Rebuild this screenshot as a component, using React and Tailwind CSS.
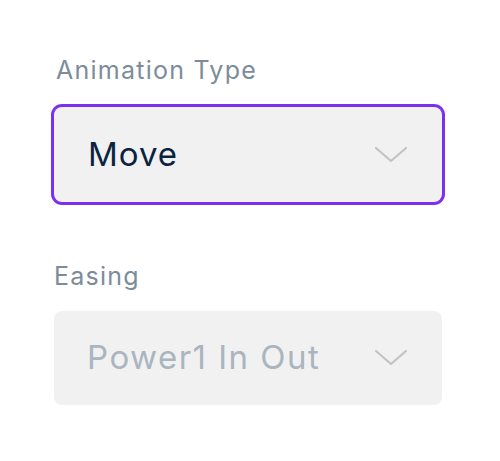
import React from "react";

function Chevron({ className }) {
  return (
    <svg width="34" height="18" viewBox="0 0 34 18" className={className} fill="none">
      <path d="M2 2 L17 15 L32 2" stroke="#c3c3c3" strokeWidth="2.2" strokeLinecap="round" strokeLinejoin="round" />
    </svg>
  );
}

export default function App() {
  return (
    <div
      className="w-[500px] h-[461px] bg-white pl-[54px] pt-[52px]"
      style={{ fontFamily: "Inter, 'Noto Sans', sans-serif" }}
    >
      <div className="text-[25px] leading-[36px] tracking-[0.05em] text-[#7d8c9b] ml-[2px]">Animation Type</div>
      <div className="mt-[19px] w-[388px] h-[95px] rounded-[8px] bg-[#f1f1f1] ring-[3px] ring-[#7b2ff2] flex items-center justify-between pl-[34px] pr-[34px]">
        <span className="text-[33px] tracking-[0.03em] text-[#0c2340]">Move</span>
        <Chevron />
      </div>
      <div className="mt-[56px] text-[25px] leading-[36px] tracking-[0.05em] text-[#7d8c9b]">Easing</div>
      <div className="mt-[17px] w-[388px] h-[94px] rounded-[8px] bg-[#f1f1f1] flex items-center justify-between pl-[33px] pr-[34px]">
        <span className="text-[33px] tracking-[0.045em] text-[#aab5bf]">Power1 In Out</span>
        <Chevron />
      </div>
    </div>
  );
}
